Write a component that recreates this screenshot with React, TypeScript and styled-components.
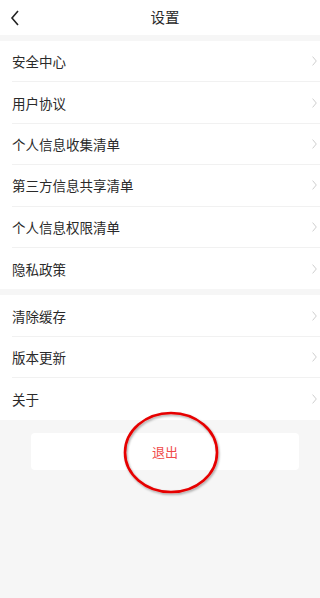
import { createGlobalStyle, styled } from "styled-components";

const GlobalStyle = createGlobalStyle`
  html, body {
    margin: 0;
    padding: 0;
    background-color: #f6f6f6;
  }
  body {
    font-family: "Noto Sans CJK SC", "Noto Sans", sans-serif;
    color: #333;
  }
`;

const Page = styled.div`
  width: 100%;
  min-height: 598px;
  background-color: #f6f6f6;
  overflow: hidden;
`;

const Header = styled.div`
  position: relative;
  height: 35px;
  display: flex;
  align-items: center;
  justify-content: center;
  background-color: #fff;
`;

const BackButton = styled.div`
  position: absolute;
  left: 10px;
  top: 9px;
  width: 12px;
  height: 18px;
  display: flex;
  align-items: center;
`;

const Title = styled.div`
  font-size: 14.5px;
  color: #2a2a2a;
  margin-left: 10px;
  line-height: 1;
`;

const Group = styled.div`
  margin-top: 6px;
  background-color: #fff;
`;

const Row = styled.div<{ $last?: boolean }>`
  height: 41.4px;
  margin-left: 12px;
  padding-right: 3px;
  display: flex;
  align-items: center;
  justify-content: space-between;
  box-sizing: border-box;
  border-bottom: ${(props) => (props.$last ? "none" : "1px solid #f1f1f1")};
`;

const Label = styled.span`
  font-size: 13.5px;
  color: #2a2a2a;
`;

const Chevron = styled.svg`
  width: 5px;
  height: 10px;
  flex-shrink: 0;
`;

const LogoutButton = styled.div`
  position: relative;
  margin: 13px 21px 0 31px;
  height: 37px;
  border-radius: 4px;
  background-color: #fff;
  display: flex;
  align-items: center;
  justify-content: center;
  color: #f04b4b;
  font-size: 13px;
`;

/* red hand-drawn annotation ring lying over the logout text */
const Circle = styled.svg`
  position: absolute;
  left: 50%;
  top: 50%;
  width: 102px;
  height: 88px;
  transform: translate(calc(-50% + 6px), calc(-50% + 1.5px));
  pointer-events: none;
  overflow: visible;
`;

const firstGroup = [
  "安全中心",
  "用户协议",
  "个人信息收集清单",
  "第三方信息共享清单",
  "个人信息权限清单",
  "隐私政策",
];

const secondGroup = ["清除缓存", "版本更新", "关于"];

function Arrow() {
  return (
    <Chevron viewBox="0 0 5 10">
      <path d="M0.6 0.6 L4.3 5 L0.6 9.4" fill="none" stroke="#c8c8c8" strokeWidth="0.9" />
    </Chevron>
  );
}

function App() {
  return (
    <>
      <GlobalStyle />
      <Page>
        <Header>
          <BackButton>
            <svg width="10" height="16" viewBox="0 0 10 16">
              <path d="M8 1 L2 8 L8 15" fill="none" stroke="#222" strokeWidth="1.6" />
            </svg>
          </BackButton>
          <Title>设置</Title>
        </Header>
        <Group>
          {firstGroup.map((item, i) => (
            <Row key={item} $last={i === firstGroup.length - 1}>
              <Label>{item}</Label>
              <Arrow />
            </Row>
          ))}
        </Group>
        <Group>
          {secondGroup.map((item, i) => (
            <Row key={item} $last={i === secondGroup.length - 1}>
              <Label>{item}</Label>
              <Arrow />
            </Row>
          ))}
        </Group>
        <LogoutButton>
          退出
          <Circle viewBox="0 0 102 88">
            <defs>
              <filter id="shadow" x="-20%" y="-20%" width="140%" height="140%">
                <feDropShadow dx="1" dy="1.5" stdDeviation="1" floodColor="#000" floodOpacity="0.35" />
              </filter>
            </defs>
            <ellipse
              cx="51"
              cy="44"
              rx="46"
              ry="39.5"
              fill="none"
              stroke="#e60000"
              strokeWidth="2.6"
              filter="url(#shadow)"
            />
          </Circle>
        </LogoutButton>
      </Page>
    </>
  );
}

export default App;
